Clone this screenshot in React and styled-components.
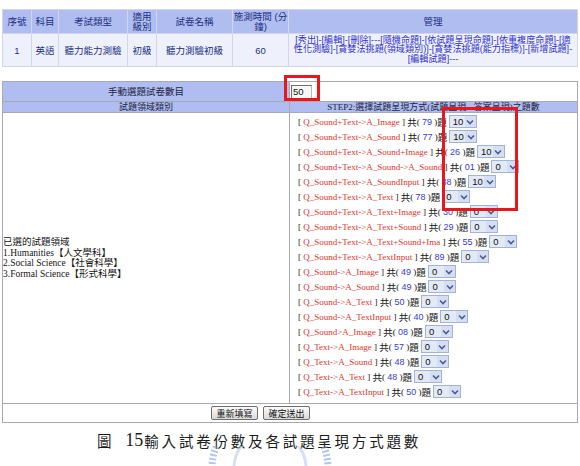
import React from 'react';
import styled, { createGlobalStyle } from 'styled-components';

const GlobalStyle = createGlobalStyle`
  html, body {
    margin: 0;
    padding: 0;
    background: #fff;
  }
  body {
    font-family: "Liberation Sans", "Noto Sans CJK TC", sans-serif;
  }
`;

const Page = styled.div`
  position: relative;
  width: 580px;
  height: 466px;
  overflow: hidden;
  box-sizing: border-box;
  padding: 9px 0 0 2px;
`;

const Grid = styled.table`
  width: 575px;
  border-collapse: collapse;
  table-layout: fixed;
  border: 1px solid #9c9c9c;
  margin-top: ${p => p.$gap || 0}px;
`;

const HeadCell = styled.th`
  background: #afbdf1;
  color: #22307f;
  font-weight: normal;
  font-size: 9.5px;
  line-height: 10px;
  height: 23px;
  padding: 0;
  border: 1px solid #d2d6ea;
  text-align: center;
  white-space: nowrap;
`;

const DataCell = styled.td`
  background: #eef0fb;
  color: #22307f;
  font-size: 9.5px;
  height: 32px;
  padding: 0;
  border: 1px solid #d2d6ea;
  text-align: center;
  white-space: nowrap;
`;

const Manage = styled(DataCell)`
  color: #3434c8;
  font-size: 9.1px;
  line-height: 9.5px;
  overflow: hidden;
`;

const BandCell = styled.td`
  background: #afbdf1;
  color: #1d2440;
  font-size: ${p => (p.$thin ? 9 : 9.5)}px;
  font-family: ${p =>
    p.$thin
      ? '"Liberation Serif", "Noto Sans CJK TC", serif'
      : '"Liberation Sans", "Noto Sans CJK TC", sans-serif'};
  line-height: ${p => (p.$thin ? 10 : 19)}px;
  height: ${p => (p.$thin ? 10 : 19)}px;
  padding: 0;
  border: 1px solid #a8a8b8;
  text-align: center;
  white-space: nowrap;
  overflow: hidden;
`;

const InputCell = styled.td`
  background: #fff;
  padding: 0 0 0 1px;
  border: 1px solid #a8a8b8;
`;

const CountInput = styled.span`
  display: block;
  width: 21px;
  height: 14px;
  box-sizing: border-box;
  border: 1px solid #b9b9b9;
  border-top-color: #6e6e6e;
  border-left-color: #6e6e6e;
  background: #f7f7f7;
  font-size: 9.5px;
  line-height: 12px;
  padding-left: 1px;
  color: #111;
`;

const DomainCell = styled.td`
  vertical-align: middle;
  padding: 0;
  border: 1px solid #a8a8b8;
  font-family: "Liberation Serif", "Noto Sans CJK TC", serif;
  font-size: 9.5px;
  line-height: 10.5px;
  color: #151515;
`;

const ListCell = styled.td`
  vertical-align: top;
  padding: 1px 0 4px 8px;
  border: 1px solid #a8a8b8;
`;

const ItemRow = styled.div`
  display: flex;
  align-items: center;
  height: 15px;
  font-family: "Liberation Serif", "Noto Sans CJK TC", serif;
  font-size: 9px;
  color: #151515;
  white-space: pre;
`;

const Mode = styled.span`
  color: #e0342a;
`;

const Hanzi = styled.span`
  font-family: "Noto Sans CJK TC", sans-serif;
  font-size: 9.5px;
`;

const Count = styled.span`
  color: #3b3bd0;
  font-family: "Liberation Sans", sans-serif;
`;

const Picker = styled.span`
  display: inline-flex;
  width: 28px;
  height: 13px;
  box-sizing: border-box;
  margin-left: 2px;
  border: 1px solid #a3b3d6;
  background: #e4e9f6;
`;

const PickValue = styled.span`
  flex: 1;
  font-family: "Liberation Sans", sans-serif;
  font-size: 9.5px;
  line-height: 11px;
  padding-left: 3px;
  color: #111;
`;

const PickArrow = styled.span`
  width: 11px;
  display: flex;
  align-items: center;
  justify-content: center;
  background: #d5def3;
`;

const ButtonCell = styled.td`
  height: 18px;
  padding: 0 0 0 208px;
  border: 1px solid #a8a8b8;
`;

const ButtonRow = styled.div`
  display: flex;
  gap: 5px;
`;

const FormButton = styled.span`
  display: inline-flex;
  align-items: center;
  justify-content: center;
  width: 47px;
  height: 14px;
  box-sizing: border-box;
  border: 1px solid #6f6f6f;
  border-radius: 2px;
  background: linear-gradient(#fbfbfb, #dadada);
  font-size: 9px;
  color: #111;
`;

const Caption = styled.div`
  display: flex;
  align-items: center;
  margin: 7px 0 0 95px;
  font-family: "Noto Sans CJK TC", serif;
  font-size: 14.5px;
  font-weight: 400;
  color: #1c1c1c;
  letter-spacing: 2.8px;
  white-space: nowrap;
`;

const FigNo = styled.span`
  font-family: "Liberation Serif", serif;
  font-size: 18px;
  letter-spacing: 0;
  margin: 0 1px 0 11px;
`;

const Mark = styled.div`
  position: absolute;
  left: ${p => p.$x}px;
  top: ${p => p.$y}px;
  width: ${p => p.$w}px;
  height: ${p => p.$h}px;
  box-sizing: border-box;
  border: 3px solid #e8161d;
  pointer-events: none;
`;

const Watermark = styled.svg`
  position: absolute;
  left: 200px;
  top: 446px;
  opacity: 0.55;
`;

const items = [
  ['Q_Sound+Text->A_Image', '79', '10'],
  ['Q_Sound+Text->A_Sound', '77', '10'],
  ['Q_Sound+Text->A_Sound+Image', '26', '10'],
  ['Q_Sound+Text->A_Sound->A_Sound', '01', '0'],
  ['Q_Sound+Text->A_SoundInput', '38', '10'],
  ['Q_Sound+Text->A_Text', '78', '0'],
  ['Q_Sound+Text->A_Text+Image', '30', '0'],
  ['Q_Sound+Text->A_Text+Sound', '29', '0'],
  ['Q_Sound+Text->A_Text+Sound+Ima', '55', '0'],
  ['Q_Sound+Text->A_TextInput', '89', '0'],
  ['Q_Sound->A_Image', '49', '0'],
  ['Q_Sound->A_Sound', '49', '0'],
  ['Q_Sound->A_Text', '50', '0'],
  ['Q_Sound->A_TextInput', '40', '0'],
  ['Q_Sound>A_Image', '08', '0'],
  ['Q_Text->A_Image', '57', '0'],
  ['Q_Text->A_Sound', '48', '0'],
  ['Q_Text->A_Text', '48', '0'],
  ['Q_Text->A_TextInput', '50', '0']
];

const Chevron = () => (
  <svg width="8" height="6" viewBox="0 0 8 6">
    <path d="M1 1.5 L4 4.5 L7 1.5" fill="none" stroke="#4a5f8c" strokeWidth="1.6" />
  </svg>
);

const App = () => (
  <Page>
    <GlobalStyle />
    <Grid>
      <colgroup>
        <col style={{ width: 29 }} />
        <col style={{ width: 27 }} />
        <col style={{ width: 69 }} />
        <col style={{ width: 29 }} />
        <col style={{ width: 76 }} />
        <col style={{ width: 56 }} />
        <col style={{ width: 289 }} />
      </colgroup>
      <thead>
        <tr>
          <HeadCell>序號</HeadCell>
          <HeadCell>科目</HeadCell>
          <HeadCell>考試類型</HeadCell>
          <HeadCell>
            適用
            <br />
            級別
          </HeadCell>
          <HeadCell>試卷名稱</HeadCell>
          <HeadCell>
            施測時間 (分
            <br />
            鐘)
          </HeadCell>
          <HeadCell>管理</HeadCell>
        </tr>
      </thead>
      <tbody>
        <tr>
          <DataCell>1</DataCell>
          <DataCell>英語</DataCell>
          <DataCell>聽力能力測驗</DataCell>
          <DataCell>初級</DataCell>
          <DataCell>聽力測驗初級</DataCell>
          <DataCell>60</DataCell>
          <Manage>
            [秀出]-[編輯]-[刪除]---[隨機命題]-[依試題呈現命題]-[依重複度命題]-[適
            <br />
            性化測驗]-[貪婪法挑題(領域類別)]-[貪婪法挑題(能力指標)]-[新增試題]-
            <br />
            [編輯試題]---
          </Manage>
        </tr>
      </tbody>
    </Grid>

    <Grid $gap={14}>
      <colgroup>
        <col style={{ width: 287 }} />
        <col style={{ width: 288 }} />
      </colgroup>
      <tbody>
        <tr>
          <BandCell>手動選題試卷數目</BandCell>
          <InputCell>
            <CountInput>50</CountInput>
          </InputCell>
        </tr>
        <tr>
          <BandCell $thin>試題領域類別</BandCell>
          <BandCell $thin>STEP2:選擇試題呈現方式(試題呈現 - 答案呈現)之題數</BandCell>
        </tr>
        <tr>
          <DomainCell>
            已選的試題領域
            <br />
            1.Humanities【人文學科】
            <br />
            2.Social Science【社會科學】
            <br />
            3.Formal Science【形式科學】
          </DomainCell>
          <ListCell>
            {items.map(([mode, total, pick], i) => (
              <ItemRow key={i}>
                {'[ '}
                <Mode>{mode}</Mode>
                {' ] '}
                <Hanzi>共</Hanzi>
                {'( '}
                <Count>{total}</Count>
                {' )'}
                <Hanzi>題</Hanzi>
                <Picker>
                  <PickValue>{pick}</PickValue>
                  <PickArrow>
                    <Chevron />
                  </PickArrow>
                </Picker>
              </ItemRow>
            ))}
          </ListCell>
        </tr>
        <tr>
          <ButtonCell colSpan={2}>
            <ButtonRow>
              <FormButton>重新填寫</FormButton>
              <FormButton>確定送出</FormButton>
            </ButtonRow>
          </ButtonCell>
        </tr>
      </tbody>
    </Grid>

    <Caption>
      <span>圖</span>
      <FigNo>15</FigNo>
      <span>輸入試卷份數及各試題呈現方式題數</span>
    </Caption>

    <Mark $x={284} $y={75} $w={36} $h={26} />
    <Mark $x={442} $y={107} $w={76} $h={104} />

    <Watermark width="140" height="20" viewBox="0 0 140 20">
      <path
        d="M12 22 A58 58 0 0 1 128 22"
        fill="none"
        stroke="#7d98dc"
        strokeWidth="7"
        strokeDasharray="2 2"
      />
      <path
        d="M34 22 A36 36 0 0 1 106 22"
        fill="none"
        stroke="#b7c6ec"
        strokeWidth="3"
      />
    </Watermark>
  </Page>
);

export default App;
